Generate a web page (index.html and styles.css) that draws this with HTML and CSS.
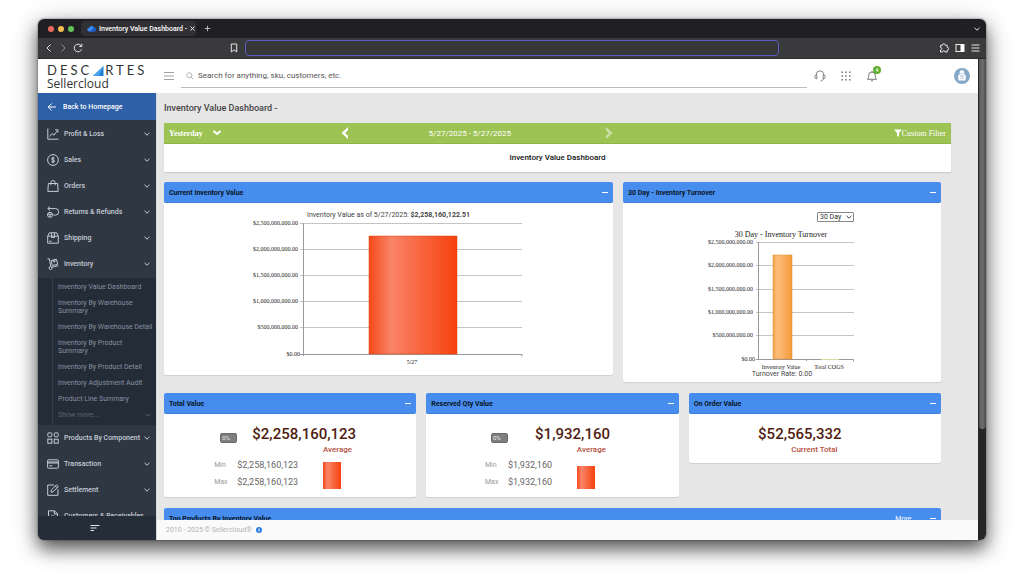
FILE: index.html
```
<!DOCTYPE html>
<html lang="en">
<head>
    <meta charset="UTF-8">
    <meta name="viewport" content="width=device-width, initial-scale=1.0">
    <title>Inventory Value Dashboard</title>
    <link rel="stylesheet" href="styles.css">
</head>
<body>
    <!-- Shared icons -->
    <svg class="sprite" aria-hidden="true">
        <symbol id="chevron" viewBox="0 0 8 8"><path d="M1.5 2.8 4 5.2l2.5-2.4"/></symbol>
        <symbol id="profit" viewBox="0 0 12 12"><path d="M.8.5v10.7h10.7M2.5 8.5 5 5.5l2 1.7 3.7-5M8.2 1.8h2.7v2.7"/></symbol>
        <symbol id="sales" viewBox="0 0 12 12"><circle cx="6" cy="6" r="5.4"/><path d="M7.6 4.4C7.2 3.8 4.5 3.5 4.5 4.9S7.6 5.7 7.6 7.1 4.8 8.3 4.3 7.5M6 2.7v6.6"/></symbol>
        <symbol id="orders" viewBox="0 0 12 12"><path d="M1.4 3.5h9.2l.6 7.9H.8zM3.9 5.3V2.6a2.1 2.1 0 0 1 4.2 0v2.7"/></symbol>
        <symbol id="returns" viewBox="0 0 12 12"><path d="M3 .6 .8 2.6 3 4.6M.8 2.6h7.7a2.9 2.9 0 0 1 0 6.5H6.5"/><circle cx="3" cy="8.8" r="2.5"/><path d="M.6 8.2h4.8M3 8.2v3"/></symbol>
        <symbol id="shipping" viewBox="0 0 12 12"><path d="M.7 4.2 2.3.8h7.4l1.6 3.4v7H.7zM.7 4.2h10.6M4.6.8v4.8h2.8V.8M2.3 9.3h2.3"/></symbol>
        <symbol id="inventory" viewBox="0 0 12 12"><path d="M.5.8h1.8l1.5 7.8M4.9 9.2l6.6-1.5M4.2 2.5l5.3-1.3 1.1 5.1-5.3 1.2zM6.3 2l.5 2 1.3-.3-.5-2"/><circle cx="3.6" cy="10" r="1.5"/></symbol>
        <symbol id="grid" viewBox="0 0 12 12"><rect x=".8" y=".8" width="4" height="4" rx="1"/><rect x="7.2" y=".8" width="4" height="4" rx="1"/><rect x=".8" y="7.2" width="4" height="4"/><rect x="7.2" y="7.2" width="4" height="4"/></symbol>
        <symbol id="card" viewBox="0 0 12 12"><rect x=".6" y="1.8" width="10.8" height="8.4" rx="1"/><path d="M.6 4h10.8M.6 5h10.8M2.3 7.8h3"/></symbol>
        <symbol id="settle" viewBox="0 0 12 12"><path d="M7 1H.7v10.3H11V5.2M4 8.2l.4-2.3L9.5.8l1.8 1.8-5.1 5.1zM8.3 2l1.8 1.8"/></symbol>
        <symbol id="file" viewBox="0 0 12 12"><path d="M1.5.8h6l3 3v7.6h-9zM7.3.8V4h3.2M4 6h3"/></symbol>
        <linearGradient id="redBar">
            <stop offset="0" stop-color="#f5491b"/>
            <stop offset=".25" stop-color="#fa8468"/>
            <stop offset="1" stop-color="#f6410d"/>
        </linearGradient>
        <linearGradient id="orangeBar">
            <stop offset="0" stop-color="#f5a44b"/>
            <stop offset=".25" stop-color="#fbbd7c"/>
            <stop offset="1" stop-color="#f69a38"/>
        </linearGradient>
    </svg>

    <div class="browser">
        <div class="tab-bar">
            <span class="dot red"></span>
            <span class="dot yellow"></span>
            <span class="dot green"></span>
            <div class="tab">
                <svg width="9" height="7" viewBox="0 0 9 7"><path fill="#3b8cf5" d="M2.2 6.5a1.9 1.9 0 0 1 0-3.8A2.6 2.6 0 0 1 7 2.5a2 2 0 0 1 0 4z"/><path fill="#1857c4" d="M3.5 6.5 7 2.5a2 2 0 0 1 0 4z"/></svg>
                <span class="tab-title">Inventory Value Dashboard -</span>
                <button class="plain" aria-label="Close tab"><svg width="5" height="5" viewBox="0 0 5 5" stroke="#eee"><path d="M.5.5l4 4M4.5.5l-4 4"/></svg></button>
            </div>
            <button class="plain" aria-label="New tab"><svg width="7" height="7" viewBox="0 0 7 7" stroke="#bbb"><path d="M3.5.8v5.4M.8 3.5h5.4"/></svg></button>
            <button class="plain push" aria-label="Tab list"><svg class="line bright" width="8" height="8"><use href="#chevron"/></svg></button>
        </div>

        <div class="tool-bar">
            <button class="plain" aria-label="Back"><svg class="line bright" width="8" height="10" viewBox="0 0 8 10"><path d="M5.5 1.5 2 5l3.5 3.5"/></svg></button>
            <button class="plain" aria-label="Forward"><svg class="line dim" width="8" height="10" viewBox="0 0 8 10"><path d="M2.5 1.5 6 5 2.5 8.5"/></svg></button>
            <button class="plain" aria-label="Reload"><svg class="line bright" width="10" height="10" viewBox="0 0 10 10"><path d="M8.6 6.3A3.8 3.8 0 1 1 8 2.6M8.8.8v2.7H6.2"/></svg></button>
            <div class="address">
                <button class="plain" aria-label="Bookmark"><svg class="line bright" width="8" height="10" viewBox="0 0 8 10"><path d="M1.3 1h5.4v8L4 6.8 1.3 9z"/></svg></button>
                <input class="url" type="text" aria-label="Address">
            </div>
            <button class="plain" aria-label="Extensions"><svg class="line bright" width="10" height="10" viewBox="0 0 10 10"><path d="M1.5 2.3h1.8a1.5 1.5 0 0 1 3 0h1.9v2a1.4 1.4 0 0 1 0 2.8v1.9H6.1a1.3 1.3 0 0 0-2.6 0h-2V6.9a1.3 1.3 0 0 0 0-2.6z"/></svg></button>
            <button class="plain" aria-label="Side panel"><svg width="10" height="10" viewBox="0 0 10 10"><rect x="1" y="1.5" width="8" height="7" fill="none" stroke="#eee"/><path fill="#fff" d="M5.5 1.5H9v7H5.5z"/></svg></button>
            <button class="plain" aria-label="Menu"><svg class="line bright" width="9" height="10" viewBox="0 0 9 10"><path d="M.5 2h8M.5 5h8M.5 8h8"/></svg></button>
        </div>

        <div class="page">
            <div class="app">
                <header class="header">
                    <a class="logo" href="#">
                        <span class="brand">DESC<svg width="11" height="10" viewBox="0 0 11 10" aria-label="A"><path fill="#1e7fd6" d="M0 10 10.5 0v10z"/><path fill="#4aa3ea" d="M0 10 10.5 0 6 10z"/></svg>RTES</span>
                        <span class="product">Sellercloud</span>
                    </a>
                    <button class="plain" aria-label="Toggle menu"><svg width="10" height="10" viewBox="0 0 10 10" stroke="#888" stroke-width=".8"><path d="M0 1.5h10M0 5h10M0 8.5h10"/></svg></button>
                    <label class="search">
                        <svg width="8" height="8" viewBox="0 0 8 8" fill="none" stroke="#999" stroke-width=".7"><circle cx="3.3" cy="3.3" r="2.6"/><path d="m5.2 5.2 2.3 2.3"/></svg>
                        <input type="text" placeholder="Search for anything, sku, customers, etc." aria-label="Search">
                    </label>
                    <div class="actions">
                        <button class="plain" aria-label="Support"><svg width="12" height="12" viewBox="0 0 12 12" fill="none" stroke="#666" stroke-width=".8"><path d="M2.3 5V4.5a3.7 3.7 0 0 1 7.4 0V5M2.8 4.8a1.7 1.7 0 0 0 0 4zM9.2 4.8a1.7 1.7 0 0 1 0 4zM9.2 8.8c0 1.5-1 2.1-2.8 2.1"/></svg></button>
                        <button class="plain" aria-label="Apps"><svg width="10" height="10" viewBox="0 0 10 10" fill="#777"><path d="M.5.5H2V2H.5zM4.2.5h1.5V2H4.2zM8 .5h1.5V2H8zM.5 4.2H2v1.5H.5zM4.2 4.2h1.5v1.5H4.2zM8 4.2h1.5v1.5H8zM.5 8H2v1.5H.5zM4.2 8h1.5v1.5H4.2zM8 8h1.5v1.5H8z"/></svg></button>
                        <button class="plain bell" aria-label="Notifications">
                            <svg width="12" height="12" viewBox="0 0 12 12" fill="none" stroke="#555" stroke-width=".8"><path d="M1.5 9.3h9C9.3 8 9.3 7 9.3 5.3a3.3 3.3 0 0 0-6.6 0C2.7 7 2.7 8 1.5 9.3zM5 10.8h2M6 1v1"/></svg>
                            <span class="count">4</span>
                        </button>
                        <button class="plain avatar" aria-label="Account"><svg width="16" height="16" viewBox="0 0 16 16"><circle cx="8" cy="8" r="8" fill="#86a8c8"/><path fill="#fff" d="M5.6 4.6a2.4 2.4 0 0 1 4.8 0v1.8l1.6 1.3-.5 4.8h-7L4 7.7l1.6-1.3z"/><path stroke="#86a8c8" stroke-width=".8" d="M6.3 5.4h1.2M8.5 5.4h1.2M6 8h4M6.5 10.3h3"/></svg></button>
                    </div>
                </header>

                <div class="content">
                    <nav class="sidebar">
                        <a class="back" href="#"><svg class="line" width="10" height="10" viewBox="0 0 10 10"><path d="M9 5H1.3M4.7 1.5 1.2 5l3.5 3.5"/></svg>Back to Homepage</a>
                        <div class="menu">
                            <a class="item" href="#"><svg class="line" width="12" height="12"><use href="#profit"/></svg><span>Profit &amp; Loss</span><svg class="line" width="8" height="8"><use href="#chevron"/></svg></a>
                            <a class="item" href="#"><svg class="line" width="12" height="12"><use href="#sales"/></svg><span>Sales</span><svg class="line" width="8" height="8"><use href="#chevron"/></svg></a>
                            <a class="item" href="#"><svg class="line" width="12" height="12"><use href="#orders"/></svg><span>Orders</span><svg class="line" width="8" height="8"><use href="#chevron"/></svg></a>
                            <a class="item" href="#"><svg class="line" width="12" height="12"><use href="#returns"/></svg><span>Returns &amp; Refunds</span><svg class="line" width="8" height="8"><use href="#chevron"/></svg></a>
                            <a class="item" href="#"><svg class="line" width="12" height="12"><use href="#shipping"/></svg><span>Shipping</span><svg class="line" width="8" height="8"><use href="#chevron"/></svg></a>
                            <a class="item" href="#"><svg class="line" width="12" height="12"><use href="#inventory"/></svg><span>Inventory</span><svg class="line" width="8" height="8"><use href="#chevron"/></svg></a>
                            <div class="submenu">
                                <div class="sublinks">
                                    <a href="#">Inventory Value Dashboard</a>
                                    <a href="#">Inventory By Warehouse<br>Summary</a>
                                    <a href="#">Inventory By Warehouse Detail</a>
                                    <a href="#">Inventory By Product<br>Summary</a>
                                    <a href="#">Inventory By Product Detail</a>
                                    <a href="#">Inventory Adjustment Audit</a>
                                    <a href="#">Product Line Summary</a>
                                    <a class="more" href="#">Show more...<svg class="line" width="8" height="8"><use href="#chevron"/></svg></a>
                                </div>
                            </div>
                            <a class="item" href="#"><svg class="line" width="12" height="12"><use href="#grid"/></svg><span>Products By Component</span><svg class="line" width="8" height="8"><use href="#chevron"/></svg></a>
                            <a class="item" href="#"><svg class="line" width="12" height="12"><use href="#card"/></svg><span>Transaction</span><svg class="line" width="8" height="8"><use href="#chevron"/></svg></a>
                            <a class="item" href="#"><svg class="line" width="12" height="12"><use href="#settle"/></svg><span>Settlement</span><svg class="line" width="8" height="8"><use href="#chevron"/></svg></a>
                            <a class="item" href="#"><svg class="line" width="12" height="12"><use href="#file"/></svg><span>Customers &amp; Receivables</span></a>
                        </div>
                        <button class="plain collapse" aria-label="Collapse menu"><svg width="10" height="8" viewBox="0 0 10 8" stroke="#dfe5ee"><path d="M.5 1.5h9M.5 4h6M.5 6.5h3.5"/></svg></button>
                    </nav>

                    <main class="main">
                        <div class="scroll">
                            <h1>Inventory Value Dashboard -</h1>

                            <section class="period">
                                <div class="period-bar">
                                    <button class="plain range">Yesterday <svg width="10" height="8" viewBox="0 0 10 8" fill="none" stroke="#fff" stroke-width="2"><path d="m1.5 2 3.5 3L8.500 2"/></svg></button>
                                    <div class="stepper">
                                        <button class="plain" aria-label="Previous"><svg width="8" height="12" viewBox="0 0 8 12"><path fill="#fff" d="M7 0v3.200L4 6l3 2.800V12L.5 6z"/></svg></button>
                                        <span>5/27/2025 - 5/27/2025</span>
                                        <button class="plain next" aria-label="Next"><svg width="8" height="12" viewBox="0 0 8 12"><path fill="#fff" d="M1 0v3.200L4 6 1 8.800V12l6.500-6z"/></svg></button>
                                    </div>
                                    <button class="plain filter"><svg width="8" height="8" viewBox="0 0 8 8"><path fill="#fff" d="M0 .5h8L5 4v4L3 6.500V4z"/></svg>Custom Filter</button>
                                </div>
                                <h2>Inventory Value Dashboard</h2>
                            </section>

                            <div class="cards charts">
                                <section class="panel">
                                    <h3>Current Inventory Value <button class="plain fold" aria-label="Collapse"></button></h3>
                                    <div class="panel-body current">
                                        <p>Inventory Value as of 5/27/2025: <b>$2,258,160,122.51</b></p>
                                        <svg class="chart" width="276" height="150" viewBox="0 0 276 150">
                                            <path class="gridline" d="M50 5.500h222M50 31.500h222M50 57.500h222M50 83.500h222M50 109.500h222"/>
                                            <path class="axis" d="M53.500 5v133M50 136.500h222v2"/>
                                            <rect x="119" y="18" width="88" height="118" fill="url(#redBar)" stroke="#e2450f" stroke-width=".5"/>
                                            <g text-anchor="end">
                                                <text x="48" y="7">$2,500,000,000.00</text>
                                                <text x="48" y="33">$2,000,000,000.00</text>
                                                <text x="48" y="59">$1,500,000,000.00</text>
                                                <text x="48" y="85">$1,000,000,000.00</text>
                                                <text x="48" y="111">$500,000,000.00</text>
                                                <text x="50" y="138">$0.00</text>
                                            </g>
                                            <text x="162" y="146" text-anchor="middle">5/27</text>
                                        </svg>
                                    </div>
                                </section>

                                <section class="panel">
                                    <h3>30 Day - Inventory Turnover <button class="plain fold" aria-label="Collapse"></button></h3>
                                    <div class="panel-body turnover">
                                        <div class="days">
                                            <select aria-label="Turnover period"><option>30 Day</option></select>
                                            <svg class="line" width="8" height="8"><use href="#chevron"/></svg>
                                        </div>
                                        <svg class="chart" width="148" height="143" viewBox="0 0 148 143">
                                            <text class="chart-title" x="73" y="10" text-anchor="middle">30 Day - Inventory Turnover</text>
                                            <path class="gridline" d="M48 15.500h98M48 38.500h98M48 62.500h98M48 85.500h98M48 108.500h98"/>
                                            <path class="axis" d="M50.500 15v118M48 132.500h97.500v2M98.500 132v2"/>
                                            <rect x="65" y="28" width="19" height="104" fill="url(#orangeBar)" stroke="#d8892f" stroke-width=".5"/>
                                            <path stroke="#d9dca0" d="M113 132.500h18"/>
                                            <g text-anchor="end">
                                                <text x="45" y="17">$2,500,000,000.00</text>
                                                <text x="45" y="40">$2,000,000,000.00</text>
                                                <text x="45" y="64">$1,500,000,000.00</text>
                                                <text x="45" y="87">$1,000,000,000.00</text>
                                                <text x="45" y="110">$500,000,000.00</text>
                                                <text x="47" y="134">$0.00</text>
                                            </g>
                                            <g text-anchor="middle">
                                                <text x="73" y="142">Inventory Value</text>
                                                <text x="121" y="142">Total COGS</text>
                                            </g>
                                        </svg>
                                        <p>Turnover Rate: 0.00</p>
                                    </div>
                                </section>
                            </div>

                            <div class="cards totals">
                                <section class="panel">
                                    <h3>Total Value <button class="plain fold" aria-label="Collapse"></button></h3>
                                    <div class="panel-body">
                                        <div class="stat">
                                            <div class="stat-top"><span class="percent">0%</span><strong>$2,258,160,123</strong></div>
                                            <div class="stat-label">Average</div>
                                            <div class="stat-bottom">
                                                <dl><dt>Min</dt><dd>$2,258,160,123</dd><dt>Max</dt><dd>$2,258,160,123</dd></dl>
                                                <svg width="18" height="27"><rect width="18" height="27" fill="url(#redBar)"/></svg>
                                            </div>
                                        </div>
                                    </div>
                                </section>
                                <section class="panel">
                                    <h3>Reserved Qty Value <button class="plain fold" aria-label="Collapse"></button></h3>
                                    <div class="panel-body">
                                        <div class="stat">
                                            <div class="stat-top"><span class="percent">0%</span><strong>$1,932,160</strong></div>
                                            <div class="stat-label">Average</div>
                                            <div class="stat-bottom">
                                                <dl><dt>Min</dt><dd>$1,932,160</dd><dt>Max</dt><dd>$1,932,160</dd></dl>
                                                <svg width="18" height="23"><rect width="18" height="23" fill="url(#redBar)"/></svg>
                                            </div>
                                        </div>
                                    </div>
                                </section>
                                <section class="panel">
                                    <h3>On Order Value <button class="plain fold" aria-label="Collapse"></button></h3>
                                    <div class="panel-body single">
                                        <div class="stat">
                                            <div class="stat-top"><strong>$52,565,332</strong></div>
                                            <div class="stat-label">Current Total</div>
                                        </div>
                                    </div>
                                </section>
                            </div>

                            <div class="cards">
                                <section class="panel">
                                    <h3>Top Products By Inventory Value <a href="#">More...</a><button class="plain fold" aria-label="Collapse"></button></h3>
                                </section>
                            </div>
                        </div>
                        <footer class="footer">2010 - 2025 © Sellercloud® <svg width="6" height="6" viewBox="0 0 6 6"><circle cx="3" cy="3" r="3" fill="#2a7de1"/><path stroke="#fff" d="M3 1.500v3"/></svg></footer>
                    </main>
                </div>
            </div>
            <div class="scrollbar"><div class="thumb"></div></div>
        </div>
    </div>
</body>
</html>
```
FILE: styles.css
```
/* General Styles */
* {
    box-sizing: border-box;
}

body {
    margin: 0;
    height: 100vh;
    padding: 19px 38px 36px;
    background: #fff;
    font-family: Roboto, Arial, sans-serif;
    font-size: 8px;
    color: #444;
    overflow: hidden;
}

h1, h2, h3, p, dl, dd {
    margin: 0;
}

a {
    color: inherit;
    text-decoration: none;
}

svg {
    display: block;
    flex: none;
}

.sprite {
    position: absolute;
    width: 0;
    height: 0;
}

.line {
    fill: none;
    stroke: currentColor;
    stroke-width: 1;
}

.bright {
    color: #e8e8e8;
}

.dim {
    color: #8b8b8e;
}

.plain {
    display: flex;
    align-items: center;
    padding: 0;
    border: none;
    background: none;
    color: inherit;
    font: inherit;
    cursor: pointer;
}

/* Browser window */
.browser {
    display: flex;
    flex-direction: column;
    height: 100%;
    border-radius: 6px;
    overflow: hidden;
    box-shadow: 0 0 2px rgba(0, 0, 0, 0.6), 0 9px 18px rgba(0, 0, 0, 0.6), 0 4px 30px rgba(0, 0, 0, 0.2);
}

.tab-bar {
    display: flex;
    align-items: center;
    flex: none;
    height: 19px;
    padding: 0 5px 0 10px;
    background: #202024;
}

.dot {
    width: 6px;
    height: 6px;
    margin-right: 4px;
    border-radius: 50%;
}

.red {
    background: #ee6a5f;
}

.yellow {
    background: #f5bd4f;
}

.green {
    background: #61c454;
}

.tab {
    display: flex;
    align-items: center;
    gap: 3px;
    height: 15px;
    width: 115px;
    margin: 0 8px 0 3px;
    padding: 0 5px 0 6px;
    border-radius: 4px;
    background: #313135;
    color: #fff;
    font-size: 7px;
    font-weight: 500;
}

.tab-title {
    flex: 1;
    white-space: nowrap;
}

.push {
    margin-left: auto;
}

.tool-bar {
    display: flex;
    align-items: center;
    flex: none;
    gap: 6px;
    height: 21px;
    padding: 0 6px 0 7px;
    background: #3a3a3d;
    border-bottom: 1px solid #2b2b2d;
}

.address {
    display: flex;
    align-items: center;
    flex: 1;
    gap: 7px;
    padding: 0 154px 0 141px;
}

.url {
    flex: 1;
    min-width: 0;
    height: 16px;
    border: 1px solid #5f5bc8;
    border-radius: 4px;
    background: #37373a;
    color: #fff;
    outline: none;
}

.page {
    display: flex;
    flex: 1;
    min-height: 0;
}

.scrollbar {
    width: 8px;
    padding-left: 1px;
    background: #262626;
}

.thumb {
    height: 77%;
    border-radius: 0 0 3px 3px;
    background: linear-gradient(to right, #555, #6e6e6e, #4a4a4a);
}

.app {
    display: flex;
    flex: 1;
    flex-direction: column;
    min-width: 0;
    background: #fff;
}

/* Header */
.header {
    display: flex;
    align-items: center;
    flex: none;
    height: 34px;
    padding-right: 8px;
}

.logo {
    width: 126px;
    padding: 3px 0 0 9px;
    color: #333;
    font-family: "Open Sans", sans-serif;
}

.brand {
    display: flex;
    align-items: center;
    gap: 1px;
    font-family: Lato, sans-serif;
    font-size: 13px;
    line-height: 13px;
    letter-spacing: 3px;
}

.product {
    display: block;
    font-size: 12px;
    line-height: 14px;
}

.search {
    display: flex;
    align-items: center;
    flex: 1;
    gap: 4px;
    height: 24px;
    margin-left: 7px;
    padding-left: 5px;
    border-bottom: 1px solid #bbb;
}

.search input {
    flex: 1;
    padding: 0;
    border: none;
    outline: none;
    font: inherit;
}

.search input::placeholder {
    color: #555;
}

.actions {
    display: flex;
    align-items: center;
    gap: 15px;
    margin-left: 7px;
}

.bell {
    position: relative;
}

.count {
    position: absolute;
    top: -4px;
    right: -3px;
    width: 8px;
    height: 8px;
    border-radius: 50%;
    background: #5fae2b;
    color: #fff;
    font-size: 6px;
    line-height: 8px;
    text-align: center;
}

.avatar {
    margin-left: 61px;
}

/* Sidebar */
.content {
    display: flex;
    flex: 1;
    min-height: 0;
}

.sidebar {
    display: flex;
    flex: none;
    flex-direction: column;
    width: 119px;
    border-right: 1px solid #d8dbe0;
    background: #2f3742;
    color: #c5ccd8;
    font-size: 7px;
    font-weight: 500;
}

.back {
    display: flex;
    align-items: center;
    flex: none;
    gap: 6px;
    height: 27px;
    padding: 0 9px;
    background: #2d60a6;
    color: #fff;
}

.menu {
    flex: 1;
    min-height: 0;
    padding-top: 1px;
    overflow: hidden;
}

.item {
    display: flex;
    align-items: center;
    gap: 5px;
    height: 26px;
    padding: 0 5px 0 9px;
    white-space: nowrap;
}

.item span {
    flex: 1;
    min-width: 0;
}

.submenu {
    margin-top: 1px;
    padding-left: 14px;
    background: #242c38;
    color: #8790a0;
    font-weight: 400;
}

.sublinks {
    padding: 1px 4px 2px 5px;
    border-left: 1px solid #353d49;
}

.sublinks a {
    display: block;
    padding: 4px 0;
    line-height: 8px;
    white-space: nowrap;
}

.sublinks .more {
    display: flex;
    justify-content: space-between;
    color: #5c6574;
}

.collapse {
    justify-content: center;
    flex: none;
    height: 24px;
    padding-right: 5px;
    background: #252d38;
}

/* Dashboard */
.main {
    display: flex;
    flex: 1;
    flex-direction: column;
    min-width: 0;
    background: #e6e6e6;
}

.scroll {
    flex: 1;
    min-height: 0;
    padding: 0 27px 0 7px;
    overflow: hidden;
}

h1 {
    font-size: 9px;
    font-weight: 500;
    line-height: 30px;
}

.period {
    background: #fff;
    box-shadow: 0 1px 1px rgba(0, 0, 0, 0.1);
}

.period-bar {
    display: grid;
    grid-template-columns: 17fr 27fr 33fr;
    align-items: center;
    height: 21px;
    padding: 0 5px;
    border-bottom: 1px solid #8fb548;
    background: #9dc354;
    color: #fff;
}

.range {
    gap: 9px;
    font-family: "Liberation Serif", serif;
    font-weight: bold;
}

.stepper {
    display: flex;
    align-items: center;
    justify-content: space-between;
}

.stepper span {
    padding-right: 14px;
}

.next {
    opacity: 0.5;
}

.filter {
    justify-self: end;
    font-family: "Liberation Serif", serif;
}

h2 {
    color: #111;
    font-size: 8px;
    font-weight: 500;
    line-height: 28px;
    text-align: center;
}

.cards {
    display: grid;
    align-items: start;
    gap: 10px;
    margin: 10px 10px 0 0;
}

.charts {
    grid-template-columns: 24fr 17fr;
}

.totals {
    grid-template-columns: 1fr 1fr 1fr;
}

.panel {
    background: #fff;
    border-radius: 2px;
    box-shadow: 0 1px 1px rgba(0, 0, 0, 0.1);
}

h3 {
    display: flex;
    align-items: center;
    gap: 13px;
    height: 21px;
    padding: 1px 5px 0;
    border-bottom: 1px solid #3f82dd;
    border-radius: 2px;
    background: #468dee;
    color: #0a1526;
    font-size: 7px;
    font-weight: 700;
}

h3 a {
    margin-left: auto;
    color: #fff;
    font-weight: 400;
}

.fold {
    width: 6px;
    height: 1px;
    background: #fff;
}

h3 .fold:nth-child(1) {
    margin-left: auto;
}

.chart text {
    fill: #222;
    font-family: "Liberation Serif", serif;
    font-size: 6px;
}

.chart .chart-title {
    font-size: 8px;
}

.gridline {
    fill: none;
    stroke: #c4c4c4;
}

.axis {
    fill: none;
    stroke: #999;
}

.current {
    padding: 7px 0;
    font-size: 7px;
    line-height: 10px;
    text-align: center;
}

.current .chart {
    margin: -2px auto 0;
}

.turnover {
    padding: 9px 0 4px;
    font-size: 7px;
    line-height: 8px;
    text-align: center;
}

.days {
    position: relative;
    width: 37px;
    margin: 0 87px 5px auto;
}

.days select {
    display: block;
    width: 100%;
    height: 10px;
    padding: 0 2px;
    border: 1px solid #888;
    border-radius: 1px;
    background: #fff;
    color: #333;
    font: inherit;
    appearance: none;
}

.days svg {
    position: absolute;
    top: 1px;
    right: 1px;
    pointer-events: none;
}

.turnover .chart {
    margin: 0 auto;
}

/* Totals */
.totals,
.totals + .cards {
    margin-top: 11px;
}

.totals .panel-body {
    display: flex;
    justify-content: center;
    padding: 11px 10px 6px 0;
}

.totals .single {
    padding-right: 30px;
}

.stat-top {
    display: flex;
    align-items: flex-end;
    justify-content: space-between;
    gap: 14px;
    padding-left: 6px;
}

.stat-top strong {
    color: #501d10;
    font-size: 15px;
    font-weight: 500;
    line-height: 18px;
}

.single .stat-top {
    padding-left: 0;
}

.percent {
    width: 17px;
    height: 10px;
    padding-left: 1px;
    border: 1px solid #6a6a6a;
    border-radius: 2px;
    background: #7f7f7f;
    color: #e8e8e8;
    font-size: 6px;
    line-height: 8px;
}

.stat-label {
    padding-right: 4px;
    color: #b4503c;
    font-weight: 500;
    line-height: 14px;
    text-align: right;
}

.stat-bottom {
    display: flex;
    align-items: flex-end;
    justify-content: space-between;
    gap: 25px;
    padding-right: 15px;
}

.stat-bottom svg {
    margin-bottom: 2px;
}

dl {
    display: grid;
    grid-template-columns: 13px auto;
    column-gap: 10px;
    line-height: 17px;
}

dt {
    color: #999;
    font-size: 7px;
}

dd {
    color: #666;
    font-size: 9px;
}

.footer {
    display: flex;
    align-items: center;
    flex: none;
    gap: 4px;
    height: 20px;
    padding-left: 9px;
    background: #fafafa;
    color: #b5b5b5;
    font-size: 7px;
}
```
